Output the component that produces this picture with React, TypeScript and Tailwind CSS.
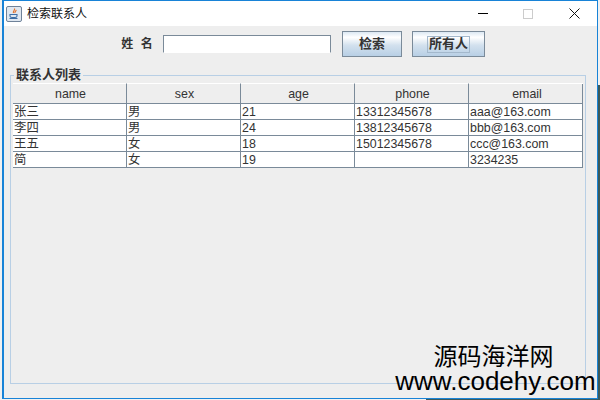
const columns = ["name", "sex", "age", "phone", "email"];

const rows = [
  ["张三", "男", "21", "13312345678", "aaa@163.com"],
  ["李四", "男", "24", "13812345678", "bbb@163.com"],
  ["王五", "女", "18", "15012345678", "ccc@163.com"],
  ["简", "女", "19", "", "3234235"],
];

const font = "font-['Liberation_Sans','Noto_Sans_CJK_SC',sans-serif]";

function JavaIcon() {
  return (
    <svg width="16" height="16" viewBox="0 0 16 16" className="shrink-0">
      <rect x="0.5" y="0.5" width="15" height="15" rx="1.5" fill="#dfe7f0" stroke="#6f8299" />
      <path d="M8.5 2.500c1 1.500-2 2.500-1 4.500M10 4c.5 1-1.500 1.500-1 3" fill="none" stroke="#e2712a" strokeWidth="1.200" />
      <path d="M4 8.500h7v1.500c0 1-1 1.500-2 1.500H6c-1 0-2-.5-2-1.500zM3.500 12.500h8" fill="none" stroke="#3d6ea5" strokeWidth="1.100" />
    </svg>
  );
}

function SwingButton({ label, focused, width }: { label: string; focused?: boolean; width: string }) {
  return (
    <button
      type="button"
      className={`${width} flex h-[26px] items-center justify-center border border-[#7a8a99] bg-[linear-gradient(to_bottom,#dce8f3_0%,#ffffff_22%,#d3e1ee_55%,#b8cfe5_100%)] text-[13px] font-bold text-[#333333]`}
    >
      <span className={focused ? "flex h-[17px] items-center border border-[#a3b8cc] px-px" : ""}>{label}</span>
    </button>
  );
}

export default function App() {
  return (
    <div className={`${font} relative h-[400px] w-[600px] overflow-hidden bg-[#f1f1f1]`}>
      <div className="ml-[2px] flex h-[399px] w-[596px] flex-col border border-[#1883d7] border-l-2">
        <div className="flex h-[25px] shrink-0 items-center bg-white pl-[2px] pr-[17px]">
          <JavaIcon />
          <span className="ml-[5px] text-[12px] text-[#111111]">检索联系人</span>
          <div className="ml-auto flex items-center">
            <div className="h-px w-[10px] bg-black" />
            <div className="ml-[35px] size-[10px] border border-[#cccccc]" />
            <svg width="11" height="11" viewBox="0 0 11 11" className="ml-[36px]">
              <path d="M.5.500l10 10M10.500.500l-10 10" stroke="#111111" strokeWidth="1" fill="none" />
            </svg>
          </div>
        </div>

        <div className="flex min-h-0 flex-1 flex-col bg-[#eeeeee] pl-[6px] pr-[11px]">
          <div className="flex h-[36px] shrink-0 items-center pl-[103px]">
            <span className="w-[50px] text-center text-[12px] font-bold tracking-[2px] text-[#333333]">姓 名</span>
            <div className="h-[18px] w-[168px] border border-[#7a8a99] border-b-white bg-white" />
            <div className="ml-[11px]">
              <SwingButton label="检索" width="w-[60px]" />
            </div>
            <div className="ml-[10px]">
              <SwingButton label="所有人" focused width="w-[73px]" />
            </div>
          </div>

          <fieldset className="mb-[14px] mt-[7px] flex min-h-0 flex-1 flex-col border border-[#b8cfe5] pl-[2px] pb-0">
            <legend className="ml-px px-[2px] text-[13px] font-bold leading-[12px] text-[#333333]">联系人列表</legend>
            <div className="mt-[2px] w-[570px] border-r border-[#7a8a99]">
              <div className="grid h-[21px] grid-cols-[114px_114px_114px_114px_114px] border-b border-[#7a8a99]">
                {columns.map((column, index) => (
                  <div
                    key={column}
                    className={`flex items-center justify-center border-r border-t border-[#7a8a99] border-t-white pl-[2px] pt-px text-[12.4px] text-[#333333] ${
                      index === 4 ? "border-r-0" : ""
                    }`}
                  >
                    {column}
                  </div>
                ))}
              </div>
              {rows.map((row) => (
                <div key={row[0]} className="grid h-[16px] grid-cols-[114px_114px_114px_114px_114px] border-b border-[#7a8a99] bg-white">
                  {row.map((cell, index) => (
                    <div
                      key={index}
                      className={`overflow-hidden border-r border-[#7a8a99] pl-px text-[12.4px] leading-[17px] text-[#333333] ${
                        index === 4 ? "border-r-0" : ""
                      }`}
                    >
                      {cell}
                    </div>
                  ))}
                </div>
              ))}
            </div>
          </fieldset>
        </div>
      </div>

      <div className="absolute left-[426px] top-[399px] h-px w-[174px] bg-[#3a5a5c]" />
      <div className="absolute right-0 top-[85px] h-[315px] w-[2px] bg-[#3a5a5c]" />

      <div className="absolute left-[395px] top-[345px] w-[201px] text-center text-[24px] leading-[24px] text-black">
        <div className="pr-[4px]">源码海洋网</div>
        <div className="whitespace-nowrap text-[26px] leading-[24px]">www.codehy.com</div>
      </div>
    </div>
  );
}
